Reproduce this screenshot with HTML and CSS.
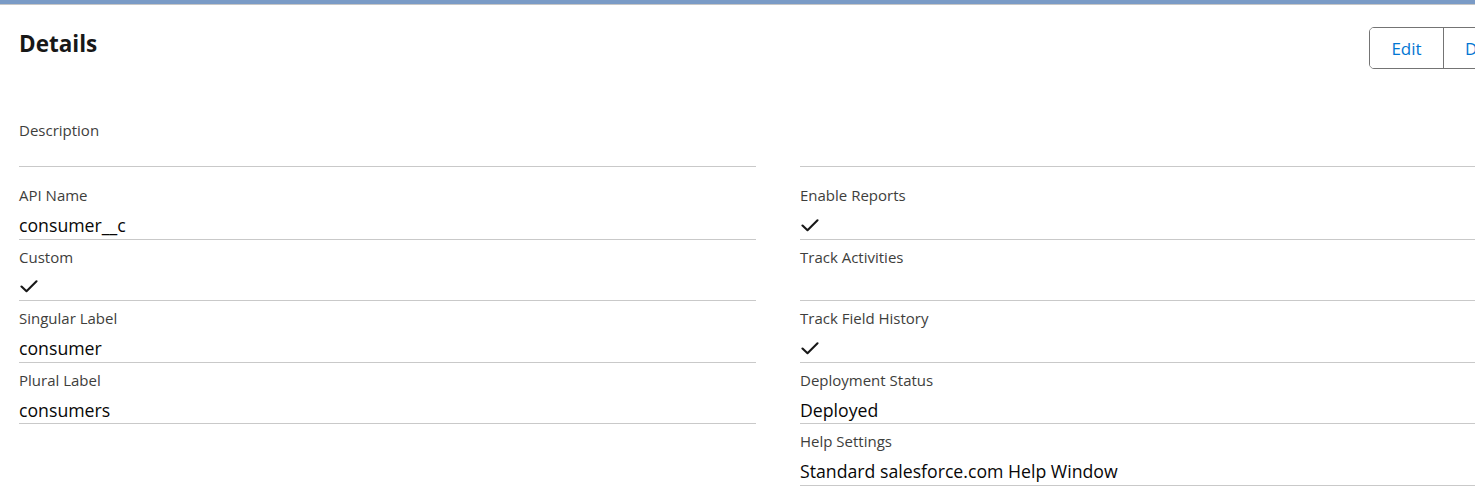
FILE: index.html
```html
<!DOCTYPE html>
<html lang="en">
<head>
<meta charset="utf-8">
<title>Details</title>
<link rel="stylesheet" href="styles.css">
</head>
<body>
<div class="top-strip"></div>
<main class="page">
  <header class="page-header">
    <h1 class="title">Details</h1>
    <div class="btn-group">
      <button class="btn">Edit</button>
      <button class="btn">Delete</button>
    </div>
  </header>

  <section class="desc-row">
    <div class="field field-desc">
      <div class="label">Description</div>
      <div class="value"></div>
    </div>
    <div class="field field-desc">
      <div class="label"></div>
      <div class="value"></div>
    </div>
  </section>

  <section class="grid">
    <div class="field"><div class="label">API Name</div><div class="value">consumer__c</div></div>
    <div class="field"><div class="label">Enable Reports</div><div class="value"><svg class="check" viewBox="0 0 18 13" width="18" height="13"><path d="M1.5 6.5 L6.5 11.2 L16.5 1.3" fill="none" stroke="#181818" stroke-width="2.1" stroke-linecap="round" stroke-linejoin="round"/></svg></div></div>
    <div class="field"><div class="label">Custom</div><div class="value"><svg class="check" viewBox="0 0 18 13" width="18" height="13"><path d="M1.5 6.5 L6.5 11.2 L16.5 1.3" fill="none" stroke="#181818" stroke-width="2.1" stroke-linecap="round" stroke-linejoin="round"/></svg></div></div>
    <div class="field"><div class="label">Track Activities</div><div class="value"></div></div>
    <div class="field"><div class="label">Singular Label</div><div class="value">consumer</div></div>
    <div class="field"><div class="label">Track Field History</div><div class="value"><svg class="check" viewBox="0 0 18 13" width="18" height="13"><path d="M1.5 6.5 L6.5 11.2 L16.5 1.3" fill="none" stroke="#181818" stroke-width="2.1" stroke-linecap="round" stroke-linejoin="round"/></svg></div></div>
    <div class="field"><div class="label">Plural Label</div><div class="value">consumers</div></div>
    <div class="field"><div class="label">Deployment Status</div><div class="value">Deployed</div></div>
    <div class="field field-blank"></div>
    <div class="field"><div class="label">Help Settings</div><div class="value">Standard salesforce.com Help Window</div></div>
  </section>
</main>
</body>
</html>
```

FILE: styles.css
```css
html, body {
  margin: 0;
  padding: 0;
  background: #ffffff;
  overflow: hidden;
}
body {
  width: 1475px;
  font-family: "Open Sans", "Noto Sans", sans-serif;
  color: #080707;
}
.top-strip {
  height: 4px;
  background: #7a9bc6;
  border-bottom: 1px solid #c6c6c6;
}
.page {
  padding-left: 19px;
  width: 1518px;
}
.page-header {
  display: flex;
  justify-content: space-between;
  align-items: flex-start;
  height: 109px;
}
.title {
  margin: 0;
  padding-top: 24px;
  font-size: 22.5px;
  line-height: 30px;
  font-weight: 700;
  color: #181818;
}
.btn-group {
  display: flex;
  margin-top: 22px;
  border: 1px solid #747474;
  border-radius: 5px;
  height: 40px;
  overflow: hidden;
}
.btn {
  border: none;
  background: #fff;
  font-family: inherit;
  font-size: 17px;
  color: #0176d3;
  padding: 0;
  height: 40px;
  width: 73px;
  text-align: center;
}
.btn + .btn {
  border-left: 1px solid #747474;
  width: 93px;
  text-align: left;
  padding-left: 21px;
}
.desc-row {
  display: grid;
  grid-template-columns: 737px 737px;
  column-gap: 44px;
}
.grid {
  display: grid;
  grid-template-columns: 737px 737px;
  column-gap: 44px;
  margin-top: 11px;
}
.field {
  padding-top: 8px;
  border-bottom: 1px solid #c9c9c9;
  height: 52.6px;
}
.field-desc {
  padding-top: 7px;
  height: 45px;
}
.field-blank {
  border-bottom: none;
}
.label {
  font-size: 15px;
  line-height: 18px;
  color: #3e3e3c;
  height: 18px;
}
.value {
  margin-top: 8px;
  font-size: 17.7px;
  line-height: 26px;
  height: 26px;
  color: #080707;
  display: flex;
  align-items: center;
}
.check {
  display: block;
  margin-left: 1px;
}
```
